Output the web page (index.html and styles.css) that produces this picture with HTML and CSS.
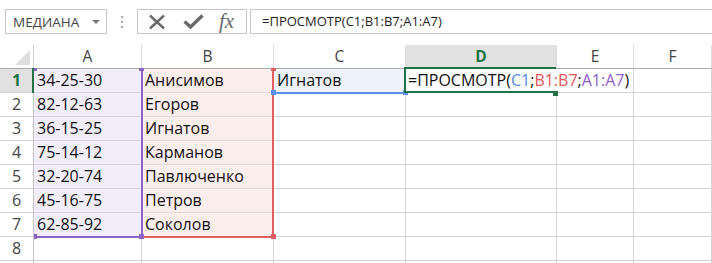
FILE: index.html
```html
<!DOCTYPE html>
<html>
<head>
	<meta charset="utf-8">
	<link rel="stylesheet" href="styles.css">
	<title>ПРОСМОТР</title>
</head>
<body>
	<div class="toolbar">
		<div class="namebox">
			<span>МЕДИАНА</span>
			<svg class="dropdown" width="8" height="4" viewBox="0 0 8 4"><polygon points="0,0 8,0 4,4" fill="#7a7a7a"/></svg>
		</div>
		<div class="grip"><i></i><i></i><i></i></div>
		<div class="fbuttons">
			<svg class="icon" width="18" height="16" viewBox="0 0 18 16">
				<path d="M2 1.5 L16 14.5 M16 1.5 L2 14.5" stroke="#6a6a6a" stroke-width="2.4" fill="none"/>
			</svg>
			<svg class="icon" width="21" height="15" viewBox="0 0 21 15">
				<path d="M1.5 7.5 L7.5 13 L19.5 1.5" stroke="#6a6a6a" stroke-width="3.4" fill="none"/>
			</svg>
			<span class="fx">fx</span>
		</div>
		<div class="finput">=ПРОСМОТР(C1;B1:B7;A1:A7)</div>
	</div>

	<div class="sheet">
		<div class="cell corner">
			<svg width="33" height="23" viewBox="0 0 33 23"><polygon points="15,20 30,20 30,5" fill="#dedede"/></svg>
		</div>
		<div class="cell ch">A</div>
		<div class="cell ch">B</div>
		<div class="cell ch">C</div>
		<div class="cell ch active">D</div>
		<div class="cell ch">E</div>
		<div class="cell ch last">F</div>

		<div class="cell rh active">1</div>
		<div class="cell ca">34-25-30</div>
		<div class="cell cb">Анисимов</div>
		<div class="cell cc">Игнатов</div>
		<div class="cell"></div>
		<div class="cell"></div>
		<div class="cell last"></div>

		<div class="cell rh">2</div>
		<div class="cell ca">82-12-63</div>
		<div class="cell cb">Егоров</div>
		<div class="cell"></div>
		<div class="cell"></div>
		<div class="cell"></div>
		<div class="cell last"></div>

		<div class="cell rh">3</div>
		<div class="cell ca">36-15-25</div>
		<div class="cell cb">Игнатов</div>
		<div class="cell"></div>
		<div class="cell"></div>
		<div class="cell"></div>
		<div class="cell last"></div>

		<div class="cell rh">4</div>
		<div class="cell ca">75-14-12</div>
		<div class="cell cb">Карманов</div>
		<div class="cell"></div>
		<div class="cell"></div>
		<div class="cell"></div>
		<div class="cell last"></div>

		<div class="cell rh">5</div>
		<div class="cell ca">32-20-74</div>
		<div class="cell cb">Павлюченко</div>
		<div class="cell"></div>
		<div class="cell"></div>
		<div class="cell"></div>
		<div class="cell last"></div>

		<div class="cell rh">6</div>
		<div class="cell ca">45-16-75</div>
		<div class="cell cb">Петров</div>
		<div class="cell"></div>
		<div class="cell"></div>
		<div class="cell"></div>
		<div class="cell last"></div>

		<div class="cell rh">7</div>
		<div class="cell ca">62-85-92</div>
		<div class="cell cb">Соколов</div>
		<div class="cell"></div>
		<div class="cell"></div>
		<div class="cell"></div>
		<div class="cell last"></div>

		<div class="cell rh">8</div>
		<div class="cell"></div>
		<div class="cell"></div>
		<div class="cell"></div>
		<div class="cell"></div>
		<div class="cell"></div>
		<div class="cell last"></div>

		<div class="cell rh"></div>
		<div class="cell"></div>
		<div class="cell"></div>
		<div class="cell"></div>
		<div class="cell"></div>
		<div class="cell"></div>
		<div class="cell last"></div>

		<!-- range outlines of the formula references -->
		<div class="mark purple range-a-right"></div>
		<div class="mark purple range-a-bottom"></div>
		<div class="mark red range-b-right"></div>
		<div class="mark red range-b-bottom"></div>
		<div class="mark red sq-b-tr"></div>
		<div class="mark red sq-b-br"></div>
		<div class="mark purple sq-a-tl"></div>
		<div class="mark purple sq-a-tr"></div>
		<div class="mark purple sq-a-bl"></div>
		<div class="mark purple sq-a-br"></div>
		<div class="mark blue range-c-bottom"></div>
		<div class="mark blue sq-c-l"></div>
		<div class="mark blue sq-c-r"></div>

		<!-- active cell D1 in edit mode -->
		<div class="editor">=ПРОСМОТР(<span class="ref-c">C1</span>;<span class="ref-b">B1:B7</span>;<span class="ref-a">A1:A7</span>)</div>
		<div class="mark green sel-rowhdr"></div>
		<div class="mark green sel-colhdr"></div>
		<div class="mark green sel-left"></div>
		<div class="mark green sel-bottom"></div>
		<div class="mark green fill-handle"></div>
	</div>
</body>
</html>
```

FILE: styles.css
```css
body {
	margin: 0;
	background-color: #ffffff;
	overflow: hidden;
	font-family: "Open Sans", "Liberation Sans", sans-serif;
	color: #111111;
}

/* formula bar */
.toolbar {
	display: flex;
	align-items: center;
	height: 45px;
	box-sizing: border-box;
	padding: 9px 0 11px 5px;
}
.namebox {
	display: flex;
	align-items: center;
	justify-content: space-between;
	width: 102px;
	height: 25px;
	box-sizing: border-box;
	border: 1px solid #c6c6c6;
	padding: 0 6px 0 7px;
	font-size: 13.5px;
	color: #444444;
}
.grip {
	display: flex;
	flex-direction: column;
	gap: 3px;
	margin-left: 14px;
}
.grip i {
	display: block;
	width: 2px;
	height: 2px;
	background-color: #a8a8a8;
}
.fbuttons {
	display: flex;
	align-items: center;
	width: 110px;
	height: 25px;
	box-sizing: border-box;
	margin-left: 14px;
	border: 1px solid #c6c6c6;
	padding: 0 0 0 10px;
	gap: 17px;
}
.fx {
	font-family: "Liberation Serif", serif;
	font-style: italic;
	font-size: 21px;
	color: #6a6a6a;
	line-height: 23px;
	margin-left: -2px;
}
.finput {
	flex: 1;
	height: 25px;
	box-sizing: border-box;
	margin-left: 3px;
	border: 1px solid #c6c6c6;
	border-right: 0;
	padding-left: 11px;
	font-size: 13px;
	line-height: 23px;
	color: #1e1e1e;
}

/* grid */
.sheet {
	position: relative;
	display: grid;
	grid-template-columns: 34px 108px 132px 132px 151px 77px 78px;
	grid-auto-rows: 24px;
}
.cell {
	box-sizing: border-box;
	border-right: 1px solid #d4d4d4;
	border-bottom: 1px solid #d4d4d4;
	font-size: 16px;
	line-height: 23px;
	padding-left: 3px;
	white-space: nowrap;
	overflow: hidden;
}
.corner {
	padding: 0;
	border-right-color: #d0d0d0;
	border-bottom-color: #ababab;
}
.corner svg {
	display: block;
}
.ch {
	padding: 0;
	text-align: center;
	font-size: 15.5px;
	color: #444444;
	border-bottom-color: #ababab;
	border-right-color: #dcdcdc;
}
.ch.active {
	background-color: #e1e1e1;
	color: #217346;
	font-weight: bold;
}
.rh {
	padding: 0;
	text-align: center;
	font-size: 16px;
	color: #444444;
	border-right-color: #c6c6c6;
}
.rh.active {
	background-color: #e1e1e1;
	color: #217346;
	font-weight: bold;
}
.ca {
	background-color: #f1eef9;
	border-bottom-color: #d8d3e3;
	border-right-color: #d8d3e3;
}
.cb {
	background-color: #fdeeee;
	border-bottom-color: #e6d6d6;
	border-right-color: #e6d6d6;
}
.cc {
	background-color: #edf2fd;
	padding-left: 3px;
}

/* overlays */
.mark {
	position: absolute;
}
.purple { background-color: #8e63c6; }
.red { background-color: #e35f5f; }
.blue { background-color: #5b8ee6; }
.green { background-color: #217346; }

.range-a-right { left: 141px; top: 24px; width: 2px; height: 168px; }
.range-a-bottom { left: 34px; top: 191px; width: 109px; height: 2px; }
.range-b-right { left: 272px; top: 24px; width: 2px; height: 168px; }
.range-b-bottom { left: 143px; top: 191px; width: 131px; height: 2px; }
.sq-b-tr { left: 271px; top: 23px; width: 5px; height: 3px; }
.sq-b-br { left: 271px; top: 189px; width: 5px; height: 5px; }
.sq-a-tl { left: 34px; top: 23px; width: 3px; height: 3px; }
.sq-a-tr { left: 139px; top: 23px; width: 5px; height: 3px; }
.sq-a-bl { left: 34px; top: 189px; width: 3px; height: 5px; }
.sq-a-br { left: 139px; top: 189px; width: 5px; height: 5px; }
.range-c-bottom { left: 274px; top: 47px; width: 131px; height: 2px; }
.sq-c-l { left: 271px; top: 45px; width: 5px; height: 5px; }
.sq-c-r { left: 403px; top: 45px; width: 5px; height: 5px; }

.editor {
	position: absolute;
	left: 406px;
	top: 24px;
	width: 226px;
	height: 23px;
	padding-left: 2px;
	box-sizing: border-box;
	background-color: #ffffff;
	font-size: 16px;
	line-height: 23px;
	white-space: nowrap;
}
.ref-c { color: #4f8be4; }
.ref-b { color: #e25656; }
.ref-a { color: #8e60c8; }

.sel-rowhdr { left: 32px; top: 23px; width: 2px; height: 25px; }
.sel-colhdr { left: 405px; top: 22px; width: 151px; height: 2px; }
.sel-left { left: 404px; top: 22px; width: 2px; height: 26px; }
.sel-bottom { left: 404px; top: 46px; width: 149px; height: 2px; }
.fill-handle { left: 553px; top: 46px; width: 5px; height: 5px; }
```
